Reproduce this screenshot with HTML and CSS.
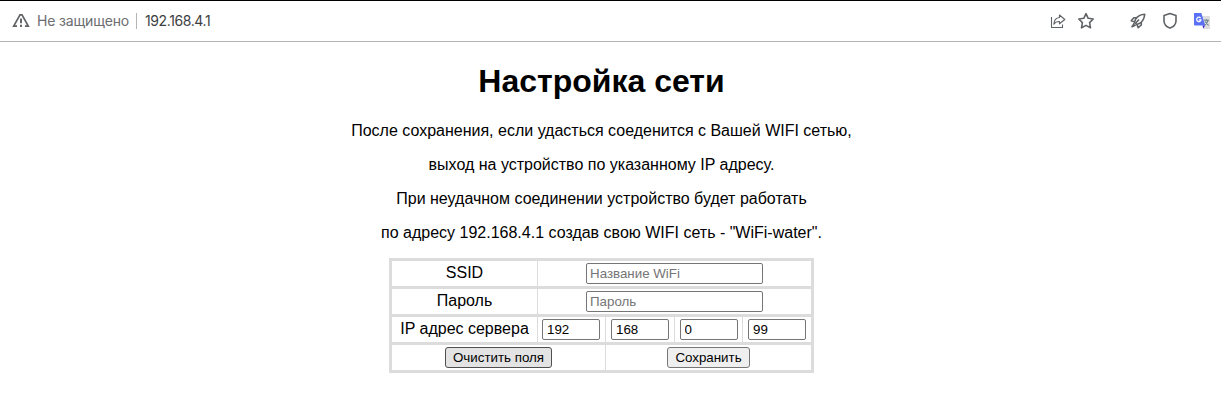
FILE: index.html
```html
<!DOCTYPE html>
<html lang="ru">
<head>
<meta charset="utf-8">
<title>Настройка сети</title>
<link rel="stylesheet" href="styles.css">
</head>
<body>
<header class="bar">
  <svg class="warn" width="18" height="16" viewBox="0 0 18 16" fill="none" stroke="#606366" stroke-width="1.7"><path d="M5 13.2H1.7L8 1.8H10L16.3 13.2H13"/><path d="M9 5.5V10.3M9 11.8V14" stroke-width="1.9"/></svg>
  <span class="insecure">Не защищено</span>
  <span class="divider"></span>
  <span class="address">192.168.4.1</span>
  <nav class="tools">
    <svg class="share" width="16" height="16" viewBox="0 0 16 16" fill="none" stroke="#606366" stroke-width="1.1" stroke-linejoin="round"><path d="M1.5 4V14.5H12.5V11.5"/><path d="M9.5 2L14.8 6.5L9.5 10.8V8.5C7 8.4 5.3 9 3.8 11.2C4.1 7.2 6 4.8 9.5 4.5Z"/></svg>
    <svg class="star" width="18" height="18" viewBox="0 0 18 18" fill="none" stroke="#606366" stroke-width="1.6" stroke-linejoin="round"><path d="M9 1.7L11.2 6.3L16.2 7L12.6 10.6L13.5 15.8L9 13.4L4.5 15.8L5.4 10.6L1.8 7L6.8 6.3Z"/></svg>
    <svg class="rocket" width="16" height="16" viewBox="0 0 16 16" fill="none" stroke="#606366" stroke-width="1.6" stroke-linejoin="round"><path d="M14.7 1.2C10.5 1.3 7.8 2.7 5.5 6.2L4.5 9.3L6.8 11.5L9.8 10.3C13.3 8 14.4 5.2 14.7 1.2Z"/><path d="M6.8 4.7H3.8L1.2 7.7L4.6 8.7M11.3 9.2V12L8.2 14.7L7 11.4M9 6.5L6 9.7M4.3 10.2L2 13.8L5.7 12"/></svg>
    <svg class="shield" width="16" height="18" viewBox="0 0 16 18" fill="none" stroke="#606366" stroke-width="1.6" stroke-linejoin="round"><path d="M8 1.5L14 3.5V9C14 12.4 11.8 14.6 8 16.1C4.2 14.6 2 12.4 2 9V3.5Z"/></svg>
    <svg class="translate" width="16" height="16" viewBox="0 0 16 16"><path d="M7 3H16V16H9Z" fill="#dedede"/><path d="M8.5 12.5H11.2L9.3 15.5Z" fill="#4423c8"/><path d="M0 0H7.3L11.3 12.5H1Q0 12.5 0 11.5Z" fill="#5a70f5"/><path d="M6.6 5.1A2.2 2.2 0 1 0 7 6.8H4.9" fill="none" stroke="#fff" stroke-width="1.2"/><path d="M10 7.3H15M12.3 6V7.3M14 7.3Q13.3 10.5 10.7 12M11.2 8.5L14.5 12.5" fill="none" stroke="#688389" stroke-width="1.1"/></svg>
  </nav>
</header>
<main class="page">
  <h1>Настройка сети</h1>
  <p>После сохранения, если удасться соеденится с Вашей WIFI сетью,</p>
  <p>выход на устройство по указанному IP адресу.</p>
  <p>При неудачном соединении устройство будет работать</p>
  <p>по адресу 192.168.4.1 создав свою WIFI сеть - "WiFi-water".</p>
  <form class="settings">
    <label class="cell name">SSID</label>
    <div class="cell wide"><input class="field" type="text" placeholder="Название WiFi"></div>
    <label class="cell name">Пароль</label>
    <div class="cell wide"><input class="field" type="text" placeholder="Пароль"></div>
    <label class="cell name">IP адрес сервера</label>
    <div class="cell first"><input class="field octet" type="text" value="192"></div>
    <div class="cell"><input class="field octet" type="text" value="168"></div>
    <div class="cell"><input class="field octet" type="text" value="0"></div>
    <div class="cell"><input class="field octet" type="text" value="99"></div>
    <div class="cell half"><button class="btn clear" type="reset">Очистить поля</button></div>
    <div class="cell rest"><button class="btn save" type="button">Сохранить</button></div>
  </form>
</main>
</body>
</html>
```
FILE: styles.css
```css
* { box-sizing: border-box; }
body { margin: 0; background: #fff; color: #000; font: 16px/18px "Liberation Sans", Arial, sans-serif; overflow: hidden; }
.bar { height: 42px; border-top: 1px solid #000; border-bottom: 1px solid #b4b4b4; display: flex; align-items: center; padding: 0 11px 0 12px; font: 14px/20px Inter, sans-serif; white-space: nowrap; }
.bar svg { display: block; flex: none; }
.insecure { width: 92px; margin-left: 7px; color: #6b6d70; letter-spacing: -0.15px; }
.divider { width: 1px; height: 16px; margin: 0 8px 0 7px; background: #b5b5b5; }
.address { color: #3c3e41; letter-spacing: -0.4px; }
.tools { margin-left: auto; display: flex; align-items: center; }
.star { margin-left: 11px; }
.rocket { margin-left: 35px; }
.shield { margin-left: 16px; }
.translate { margin-left: 16px; }
.page { padding: 21px 18px 0 0; text-align: center; }
h1 { margin: 0 0 22px; font-size: 32px; line-height: 37px; }
p { margin: 0 0 16px; }
.settings { width: 425px; margin: 0 auto; display: grid; grid-template-columns: 145px 67px 68px 67px 68px; grid-auto-rows: 25px; gap: 3px 1px; border: 3px solid #dcdcdc; background: #dcdcdc; }
.cell { background: #fff; display: flex; justify-content: center; padding-top: 2px; }
.name { padding-top: 3px; }
.first { padding-right: 1px; }
.wide { grid-column: span 4; }
.half { grid-column: span 2; }
.rest { grid-column: span 3; }
.field { width: 177px; height: 21px; margin: 0; padding: 1px 3px; border: 1px solid #767676; border-radius: 2px; background: #fff; color: #000; font: 13.333px "Liberation Sans", Arial, sans-serif; }
.field::placeholder { color: #757575; }
.octet { width: 58px; padding-left: 4px; }
.btn { height: 21px; padding: 0; border: 1px solid #767676; border-radius: 3px; background: #efefef; color: #000; font: 13.333px "Liberation Sans", Arial, sans-serif; }
.clear { width: 107px; background: #e3e3e3; border-color: #4f4f4f; }
.save { width: 83px; }
```
